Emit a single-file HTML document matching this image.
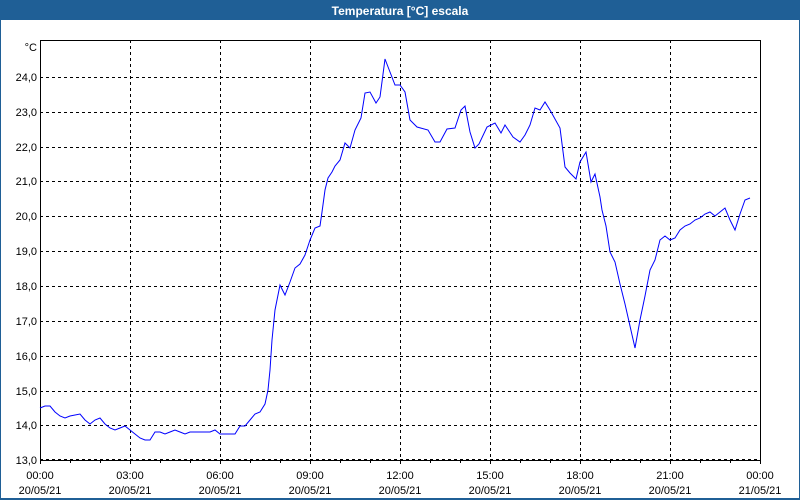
<!DOCTYPE html>
<html><head><style>
body{margin:0;width:800px;height:500px;overflow:hidden;background:#fff;font-family:"Liberation Sans",sans-serif}
</style></head><body>
<svg width="800" height="500" xmlns="http://www.w3.org/2000/svg" style="display:block">
<rect x="0" y="0" width="800" height="500" fill="#fff"/>
<rect x="0" y="0" width="800" height="20" fill="#1f5f96"/>
<rect x="0" y="0" width="1" height="500" fill="#1f5f96"/>
<rect x="799" y="0" width="1" height="500" fill="#1f5f96"/>
<rect x="0" y="498" width="800" height="2" fill="#1f5f96"/>
<text x="400" y="15" fill="#fff" font-size="12" font-weight="bold" text-anchor="middle" font-family="Liberation Sans">Temperatura [°C] escala</text>
<g stroke="#000" stroke-width="1" stroke-dasharray="3,3" fill="none">
<path d="M130.5 40V460M220.5 40V460M310.5 40V460M400.5 40V460M490.5 40V460M580.5 40V460M670.5 40V460"/>
<path d="M40 77.5H760M40 112.5H760M40 147.5H760M40 181.5H760M40 216.5H760M40 251.5H760M40 286.5H760M40 321.5H760M40 356.5H760M40 391.5H760M40 425.5H760M40 459.5H760"/>
</g>
<path d="M40.5 40.5H760.5V460.5M40.5 40V460.5H760" stroke="#000" fill="none"/>
<path d="M40.5 460v4M70.5 460v3M100.5 460v3M130.5 460v4M160.5 460v3M190.5 460v3M220.5 460v4M250.5 460v3M280.5 460v3M310.5 460v4M340.5 460v3M370.5 460v3M400.5 460v4M430.5 460v3M460.5 460v3M490.5 460v4M520.5 460v3M550.5 460v3M580.5 460v4M610.5 460v3M640.5 460v3M670.5 460v4M700.5 460v3M730.5 460v3M760.5 460v4" stroke="#000"/>
<g font-size="11" fill="#000" text-anchor="end" font-family="Liberation Sans">
<text x="37" y="51">°C</text>
<text x="37" y="81">24,0</text><text x="37" y="116">23,0</text><text x="37" y="151">22,0</text><text x="37" y="185">21,0</text><text x="37" y="220">20,0</text><text x="37" y="255">19,0</text><text x="37" y="290">18,0</text><text x="37" y="325">17,0</text><text x="37" y="360">16,0</text><text x="37" y="395">15,0</text><text x="37" y="429">14,0</text><text x="37" y="464">13,0</text>
</g>
<g font-size="11" fill="#000" text-anchor="middle" font-family="Liberation Sans">
<text x="40" y="479">00:00</text><text x="40" y="494">20/05/21</text>
<text x="130" y="479">03:00</text><text x="130" y="494">20/05/21</text>
<text x="220" y="479">06:00</text><text x="220" y="494">20/05/21</text>
<text x="310" y="479">09:00</text><text x="310" y="494">20/05/21</text>
<text x="400" y="479">12:00</text><text x="400" y="494">20/05/21</text>
<text x="490" y="479">15:00</text><text x="490" y="494">20/05/21</text>
<text x="580" y="479">18:00</text><text x="580" y="494">20/05/21</text>
<text x="670" y="479">21:00</text><text x="670" y="494">20/05/21</text>
<text x="760" y="479">00:00</text><text x="760" y="494">21/05/21</text>
</g>
<polyline fill="none" stroke="#0000ff" stroke-width="1" points="40,408 45,406 50,406 55,412 60,416 65,418 70,416 80,414 85,420 90,424 95,420 100,418 105,424 110,428 115,430 120,428 125,426 130,430 135,434 140,438 145,440 150,440 155,432 160,432 165,434 170,432 175,430 180,432 185,434 190,432 200,432 210,432 215,430 220,434 235,434 240,426 245,426 250,420 255,414 260,412 265,404 268,390 270,370 272,340 275,310 280,285 285,295 290,282 295,268 300,264 305,255 310,240 315,228 320,226 322,212 325,190 328,178 332,172 335,166 340,160 345,143 350,148 355,130 361,118 365,93 370,92 376,103 380,97 385,59 395,85 400,85 405,92 410,120 417,127 428,130 435,142 440,142 447,129 455,128 461,110 465,106 470,132 475,148 479,144 487,127 495,123 501,133 505,125 513,137 520,142 525,135 530,125 535,108 540,110 545,102 550,110 560,128 565,167 570,173 576,179 580,162 586,152 591,182 595,174 600,197 602,210 606,226 610,252 615,262 620,284 625,304 630,326 635,348 640,320 645,296 650,270 655,260 660,240 665,236 670,240 675,238 680,230 685,226 690,224 695,220 700,218 705,214 710,212 715,216 720,212 725,208 730,220 735,230 740,214 745,200 750,198"/>
</svg>
</body></html>
